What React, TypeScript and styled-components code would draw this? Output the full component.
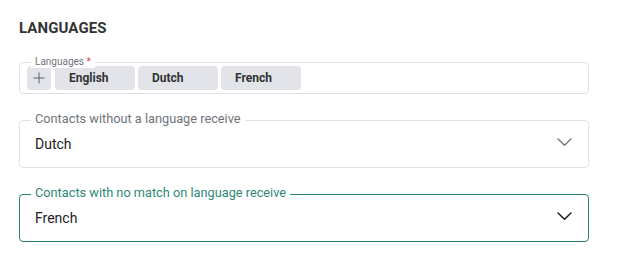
import React from "react";
import styled, { createGlobalStyle } from "styled-components";

const Global = createGlobalStyle`
  html, body { margin: 0; padding: 0; background: #ffffff; }
  body { font-family: Roboto, "Liberation Sans", Arial, sans-serif; }
`;

const Page = styled.div`
  padding: 19px 19px 18px 19px;
  width: 570px;
`;

const Title = styled.h2`
  margin: 0 0 25px 0;
  font-size: 15px;
  line-height: 18px;
  font-weight: 700;
  color: #333333;
  letter-spacing: 0.1px;
`;

const Stack = styled.div`
  display: flex;
  flex-direction: column;
  gap: 26px;
`;

const Field = styled.div<{ $height: number; $focused?: boolean }>`
  position: relative;
  box-sizing: border-box;
  height: ${(p) => p.$height}px;
  border: 1px solid ${(p) => (p.$focused ? "#2a8272" : "#dfe1e6")};
  border-radius: 4px;
  display: flex;
  align-items: center;
  padding: 0 16px 0 15px;
`;

const ChipField = styled(Field)`
  padding: 0 6px 0 7px;
`;

const Label = styled.span<{ $size: number; $top: number; $focused?: boolean }>`
  position: absolute;
  left: 11px;
  top: ${(p) => p.$top}px;
  padding: 0 4px;
  background: #ffffff;
  font-size: ${(p) => p.$size}px;
  line-height: ${(p) => Math.round(p.$size) + 2}px;
  color: ${(p) => (p.$focused ? "#2d8777" : "#6f737a")};
  white-space: nowrap;
`;

const Required = styled.span`
  color: #e0474c;
`;

const ChipRow = styled.div`
  display: flex;
  align-items: center;
  gap: 3px;
`;

const AddChip = styled.button`
  box-sizing: border-box;
  width: 24px;
  height: 24px;
  margin-right: 1px;
  border: none;
  padding: 0;
  border-radius: 4px;
  background: #e2e4e9;
  display: flex;
  align-items: center;
  justify-content: center;
  cursor: pointer;
`;

const Chip = styled.span`
  box-sizing: border-box;
  width: 80px;
  height: 24px;
  border-radius: 4px;
  background: #e2e4e9;
  padding: 0 14px;
  display: flex;
  align-items: center;
  font-size: 12px;
  font-weight: 700;
  color: #333333;
`;

const Value = styled.span`
  flex: 1;
  font-size: 14px;
  line-height: 16px;
  color: #222222;
`;

const Chevron = styled.svg<{ $dark?: boolean }>`
  flex: none;
  margin-bottom: 3px;
  color: ${(p) => (p.$dark ? "#1c1c1c" : "#76797f")};
`;

const PlusIcon = () => (
  <svg width="12" height="12" viewBox="0 0 12 12">
    <path d="M6 0.5V11.5M0.5 6H11.5" stroke="#5f6368" strokeWidth="1" fill="none" />
  </svg>
);

const ChevronDown = ({ dark }: { dark?: boolean }) => (
  <Chevron $dark={dark} width="15" height="9" viewBox="0 0 15 9">
    <polyline
      points="1,1 7.5,7.2 14,1"
      fill="none"
      stroke="currentColor"
      strokeWidth="1.5"
      strokeLinecap="round"
      strokeLinejoin="round"
    />
  </Chevron>
);

const languages = ["English", "Dutch", "French"];

export default function App() {
  return (
    <>
      <Global />
      <Page>
        <Title>LANGUAGES</Title>
        <Stack>
          <ChipField $height={32}>
            <Label $size={10} $top={-7}>
              Languages <Required>*</Required>
            </Label>
            <ChipRow>
              <AddChip aria-label="Add language">
                <PlusIcon />
              </AddChip>
              {languages.map((l) => (
                <Chip key={l}>{l}</Chip>
              ))}
            </ChipRow>
          </ChipField>

          <Field $height={48}>
            <Label $size={12.75} $top={-10}>
              Contacts without a language receive
            </Label>
            <Value>Dutch</Value>
            <ChevronDown />
          </Field>

          <Field $height={48} $focused>
            <Label $size={12.75} $top={-10} $focused>
              Contacts with no match on language receive
            </Label>
            <Value>French</Value>
            <ChevronDown dark />
          </Field>
        </Stack>
      </Page>
    </>
  );
}
